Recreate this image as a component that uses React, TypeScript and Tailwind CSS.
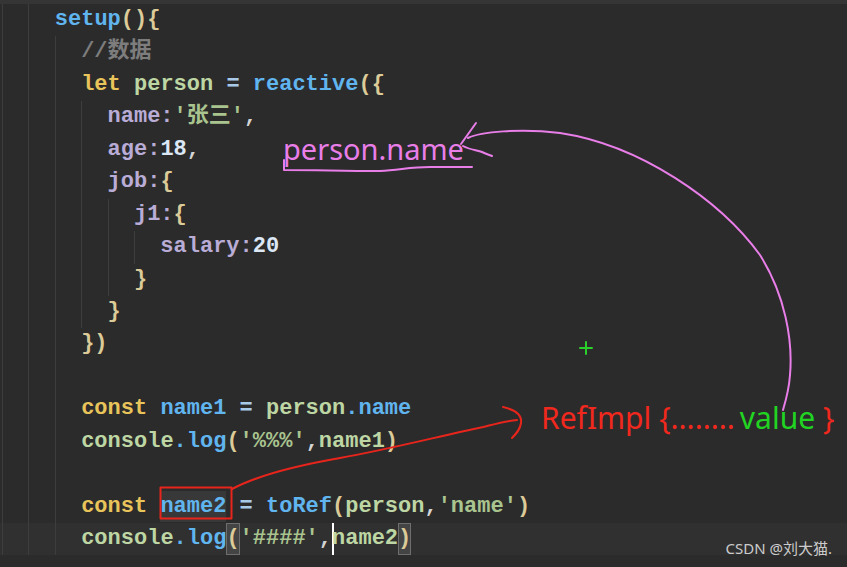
import React from "react";

type Tok = [string, string];

const C = {
  kw: "text-[#e8c45a]",
  fn: "text-[#61b5ef]",
  pn: "text-[#dccb98]",
  vr: "text-[#bdd6a3]",
  st: "text-[#a9c48f]",
  pr: "text-[#b9acd6]",
  nu: "text-[#dbe7f5]",
  op: "text-[#a9c9e9]",
  cm: "text-[#7d7d7d]",
  tx: "text-[#d4d4d4]",
};

type Line = { guides: number; toks: Tok[]; current?: boolean };

const lines: Line[] = [
  { guides: 2, toks: [["setup", C.fn], ["(){", C.pn]] },
  { guides: 3, toks: [["//数据", C.cm]] },
  {
    guides: 3,
    toks: [
      ["let ", C.kw],
      ["person ", C.vr],
      ["= ", C.op],
      ["reactive", C.fn],
      ["({", C.pn],
    ],
  },
  { guides: 4, toks: [["name:", C.pr], ["'张三'", C.st], [",", C.tx]] },
  { guides: 4, toks: [["age:", C.pr], ["18", C.nu], [",", C.tx]] },
  { guides: 4, toks: [["job:", C.pr], ["{", C.pn]] },
  { guides: 5, toks: [["j1:", C.pr], ["{", C.pn]] },
  { guides: 6, toks: [["salary:", C.pr], ["20", C.nu]] },
  { guides: 5, toks: [["}", C.pn]] },
  { guides: 4, toks: [["}", C.pn]] },
  { guides: 3, toks: [["})", C.pn]] },
  { guides: 3, toks: [] },
  {
    guides: 3,
    toks: [
      ["const ", C.kw],
      ["name1 ", C.fn],
      ["= ", C.op],
      ["person", C.vr],
      [".name", C.fn],
    ],
  },
  {
    guides: 3,
    toks: [
      ["console", C.vr],
      [".log", C.fn],
      ["(", C.pn],
      ["'%%%'", C.st],
      [",", C.tx],
      ["name1", C.vr],
      [")", C.pn],
    ],
  },
  { guides: 3, toks: [] },
  {
    guides: 3,
    toks: [
      ["const ", C.kw],
      ["@name2", C.fn],
      [" = ", C.op],
      ["toRef", C.fn],
      ["(", C.pn],
      ["person", C.vr],
      [",", C.tx],
      ["'name'", C.st],
      [")", C.pn],
    ],
  },
  {
    guides: 3,
    current: true,
    toks: [
      ["console", C.vr],
      [".log", C.fn],
      ["#(", C.pn],
      ["'####'", C.st],
      [",", C.tx],
      ["|", ""],
      ["name2", C.vr],
      ["#)", C.pn],
    ],
  },
];

const Token = ({ t }: { t: Tok }) => {
  const [text, cls] = t;
  if (text === "|") {
    return <span className="inline-block w-[2px] -mr-[2px] h-[32px] align-top bg-white" />;
  }
  if (text.startsWith("#")) {
    return (
      <span
        className={`inline-block h-[32px] align-top bg-[#444444] ring-1 ring-inset ring-[#6e6e6e] ${cls}`}
      >
        {text.slice(1)}
      </span>
    );
  }
  if (text.startsWith("@")) {
    return (
      <span className={`inline-block h-[31px] align-top bg-[#383838] ${cls}`}>
        {text.slice(1)}
      </span>
    );
  }
  return <span className={cls}>{text}</span>;
};

const CodeLine = ({ line }: { line: Line }) => (
  <div
    className={`flex h-[32.45px] items-stretch pl-[2px] ${
      line.current ? "bg-[#303030]" : ""
    }`}
  >
    {Array.from({ length: line.guides }).map((_, i) => (
      <div key={i} className="w-[26.4px] shrink-0 border-l border-[#3d3d3d]" />
    ))}
    <div className="whitespace-pre leading-[32.45px]">
      {line.toks.map((t, i) => (
        <Token key={i} t={t} />
      ))}
    </div>
  </div>
);

export default function App() {
  return (
    <div className="relative w-[847px] h-[567px] overflow-hidden bg-[#2b2b2b]">
      <div className="h-[4px] bg-[#353535]" />
      <div className="font-['Liberation_Mono','Noto_Sans_CJK_SC',monospace] text-[22px] font-bold">
        {lines.map((l, i) => (
          <CodeLine key={i} line={l} />
        ))}
      </div>

      {/* hand-drawn annotations */}
      <svg
        className="absolute inset-0 pointer-events-none"
        width={847}
        height={567}
        fill="none"
        strokeLinecap="round"
        strokeLinejoin="round"
      >
        <g stroke="#e97ee9" strokeWidth={2}>
          <path d="M468,138 C480,132 520,128 560,133 C640,145 720,200 760,255 C785,295 793,340 790,375 C789,390 786,400 783,410" />
          <path d="M461,144 L476,123" />
          <path d="M463,146 C470,150 478,150 482,152 C486,154 490,155 492,156" />
          <path d="M284,160 L284,170 C320,170 340,171 380,171 C400,170 410,167 430,167 L472,167" />
        </g>
        <g stroke="#e8251c" strokeWidth={2}>
          <rect x={160.5} y={487.5} width={71} height={31} />
          <path d="M232,489 C260,474 300,465 340,458 C390,449 440,436 483,427 C495,424 505,421 517,420" />
          <path d="M503,407 C516,410 522,416 521,423 C520,430 516,434 512,438" />
        </g>
        <g stroke="#2bd12b" strokeWidth={2}>
          <path d="M586,342 V354 M580,348 H592" />
        </g>
      </svg>

      <span className="absolute left-[283px] top-[134px] leading-none text-[29px] text-[#e97ee9] font-['Noto_Sans',sans-serif]">
        person.name
      </span>
      <span className="absolute left-[541px] top-[403px] leading-none text-[30px] whitespace-pre text-[#f0281e] font-['Noto_Sans',sans-serif]">
        RefImpl {"{"}........
        <span className="ml-[5px] text-[#22d422]">value</span> {"}"}
      </span>

      <span className="absolute right-[15px] top-[541px] leading-none text-[15px] text-[#cccccc] font-['Noto_Sans','Noto_Sans_CJK_SC',sans-serif]">
        CSDN @刘大猫.
      </span>
    </div>
  );
}
